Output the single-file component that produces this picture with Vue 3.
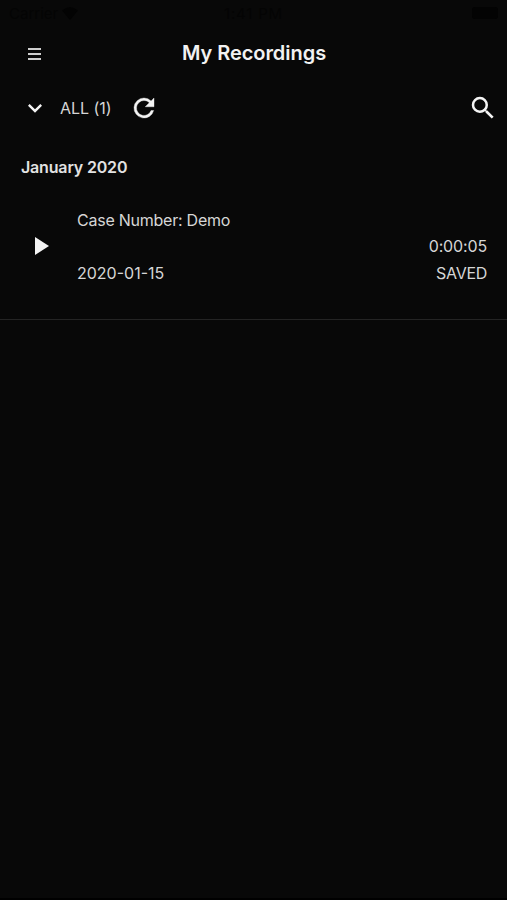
<template>
  <div class="screen">
    <div class="status-bar">
      <div class="carrier">
        <span>Carrier</span>
        <svg width="16" height="13" viewBox="0 0 16 13"><path d="M8 13L0 3.5Q8-3 16 3.5z" /></svg>
      </div>
      <span class="clock">1:41 PM</span>
      <div class="battery"></div>
    </div>

    <header class="nav-bar">
      <button class="icon-btn" aria-label="Menu">
        <svg width="13" height="12" viewBox="0 0 13 12"><path d="M0 1h13M0 6h13M0 11h13" stroke="#cecece" stroke-width="2" /></svg>
      </button>
      <h1>My Recordings</h1>
    </header>

    <div class="toolbar">
      <svg class="chevron" width="28" height="28" viewBox="0 0 24 24"><path d="M7.41 8.59L12 13.17l4.59-4.58L18 10l-6 6-6-6z" /></svg>
      <span class="filter">ALL ({{ recordings.length }})</span>
      <svg class="refresh" width="30" height="30" viewBox="0 0 24 24"><path d="M17.65 6.35A7.96 7.96 0 0 0 12 4a8 8 0 1 0 7.73 10h-2.08A6 6 0 1 1 12 6c1.66 0 3.14.69 4.22 1.78L13 11h7V4z" /></svg>
      <svg class="search" width="30" height="30" viewBox="0 0 24 24"><path d="M15.5 14h-.79l-.28-.27A6.47 6.47 0 0 0 16 9.5 6.5 6.5 0 1 0 9.5 16c1.61 0 3.09-.59 4.23-1.57l.27.28v.79l5 4.99L20.49 19zm-6 0a4.5 4.5 0 1 1 0-9 4.5 4.5 0 0 1 0 9z" /></svg>
    </div>

    <h2>January 2020</h2>

    <ul>
      <li v-for="item in recordings" :key="item.id">
        <svg class="play" width="14" height="18" viewBox="0 0 14 18"><path d="M0 0l14 9-14 9z" /></svg>
        <div class="info">
          <span class="case">Case Number: {{ item.caseNumber }}</span>
          <span class="date">{{ item.date }}</span>
        </div>
        <div class="meta">
          <span class="duration">{{ item.duration }}</span>
          <span class="state">{{ item.state }}</span>
        </div>
      </li>
    </ul>
  </div>
</template>

<script setup>
import { ref } from 'vue';

const recordings = ref([
  { id: 1, caseNumber: 'Demo', date: '2020-01-15', duration: '0:00:05', state: 'SAVED' }
]);
</script>

<style>
body {
  margin: 0;
  background: #080808;
}
</style>

<style scoped>
.screen {
  box-sizing: border-box;
  height: 900px;
  overflow: hidden;
  background: #080808;
  color: #d6d6d6;
  font-family: Inter, sans-serif;
  font-size: 16px;
  border-bottom: 2px solid #000;
}
svg {
  display: block;
  fill: #f4f4f4;
  flex-shrink: 0;
}
.status-bar {
  display: grid;
  grid-template-columns: 1fr auto 1fr;
  align-items: center;
  height: 26px;
  padding: 0 9px;
  color: #040404;
  font-size: 15px;
}
.carrier {
  display: flex;
  align-items: center;
  gap: 4px;
}
.carrier svg {
  fill: #030303;
}
.clock {
  letter-spacing: 0.8px;
}
.battery {
  justify-self: end;
  width: 26px;
  height: 12px;
  border-radius: 3px;
  background: #030303;
}
.nav-bar {
  display: grid;
  grid-template-columns: 70px 1fr 70px;
  align-items: center;
  height: 54px;
}
.icon-btn {
  padding: 2px 0 0 28px;
  border: none;
  background: none;
}
h1 {
  margin: 0;
  padding-left: 1px;
  text-align: center;
  font-size: 20px;
  font-weight: 600;
  letter-spacing: -0.05px;
  color: #f2f2f2;
}
.toolbar {
  display: flex;
  align-items: center;
  height: 56px;
  padding: 0 9.5px 0 21px;
}
.filter {
  margin-left: 11px;
  letter-spacing: -0.05px;
}
.refresh {
  margin-left: 17.5px;
  stroke: #f4f4f4;
  stroke-width: 0.3;
}
.search {
  margin-left: auto;
}
h2 {
  margin: 0;
  padding-left: 21px;
  line-height: 62px;
  font-size: 16px;
  font-weight: 600;
  letter-spacing: -0.17px;
  color: #e2e2e2;
}
ul {
  margin: 0;
  padding: 0;
  list-style: none;
}
li {
  display: flex;
  box-sizing: border-box;
  height: 122px;
  padding: 9px 20px 0 35px;
  border-bottom: 1px solid #242424;
  line-height: 26px;
}
.play {
  margin-top: 30px;
}
.info {
  display: flex;
  flex-direction: column;
  gap: 27px;
  margin-left: 28px;
}
.case {
  letter-spacing: -0.24px;
}
.meta {
  display: flex;
  flex-direction: column;
  align-items: flex-end;
  gap: 1px;
  margin: 26px 0 0 auto;
}
.duration {
  letter-spacing: -0.15px;
}
.state {
  letter-spacing: -0.3px;
}
</style>
